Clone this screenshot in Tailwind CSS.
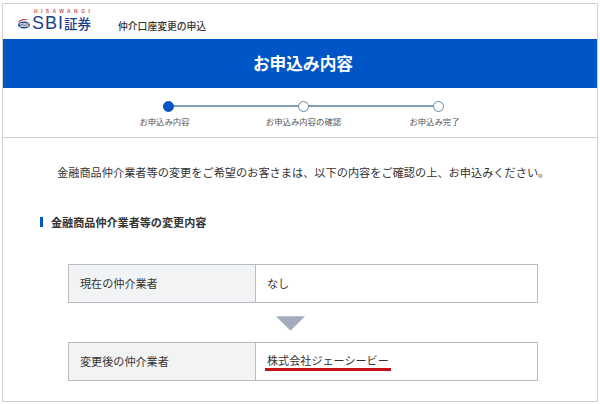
<!DOCTYPE html>
<html lang="ja">
<head>
    <meta charset="UTF-8">
    <meta name="viewport" content="width=device-width, initial-scale=1.0">
    <script src="https://cdn.jsdelivr.net/npm/@tailwindcss/browser@4"></script>
    <title>お申込み内容</title>
</head>
<body class="bg-white font-['Noto_Sans_CJK_JP','Noto_Sans',sans-serif] text-[#333]">
    <div class="w-[600px] h-[404px] pt-[3px] px-[2px] pb-[2px] overflow-hidden">
        <div class="h-[399px] border border-[#d0d0d0] overflow-hidden">
            <!-- header -->
            <div class="h-[35px] flex items-start pl-[14px]">
                <div class="w-[76px] pt-[4px] flex flex-col">
                    <div class="h-[6px] pl-[17px] text-[5px] leading-[6px] tracking-[3.4px] font-bold text-[#c9565a] font-['Liberation_Sans'] whitespace-nowrap">HISAWANGI</div>
                    <div class="flex items-center h-[15px] mt-[2px]">
                        <svg class="w-[14px] h-[13px] shrink-0" viewBox="0 0 14 13">
                            <path d="M1 6 C2 2 7 1 13 3 C8 2 4 3 1 6Z" fill="#c9302c"/>
                            <ellipse cx="7" cy="8" rx="6" ry="3.5" fill="#1b4a96"/>
                            <text x="7" y="10" font-size="5.5" font-weight="700" fill="#fff" text-anchor="middle" font-family="Liberation Sans">SBI</text>
                        </svg>
                        <span class="ml-[1px] text-[18px] leading-[15px] text-[#1b3f86] font-['Liberation_Sans'] tracking-[1px]">SBI</span>
                        <span class="text-[13.5px] leading-[15px] font-medium text-[#1b3f86] whitespace-nowrap">証券</span>
                    </div>
                </div>
                <div class="ml-[25px] mt-[16px] text-[9.8px] leading-[13px] font-medium text-[#333] whitespace-nowrap">仲介口座変更の申込</div>
            </div>
            <!-- title -->
            <div class="h-[49px] pl-[6px] bg-[#0056c6] flex items-center justify-center text-white text-[16.7px] font-bold">お申込み内容</div>
            <!-- steps -->
            <div class="h-[50px] border-b border-[#cfcfcf] relative">
                <div class="absolute left-[166px] top-[17px] w-[270px] h-[2px] bg-[#7f9fb3]"></div>
                <div class="grid grid-cols-3 w-[405px] ml-[98px] pt-[13px] relative">
                    <div class="flex flex-col items-center">
                        <span class="w-[11px] h-[11px] rounded-full bg-[#0056c6] border border-[#0056c6]"></span>
                        <span class="mt-[3px] -ml-[8px] text-[8.4px] leading-[12px] text-[#555] whitespace-nowrap">お申込み内容</span>
                    </div>
                    <div class="flex flex-col items-center">
                        <span class="w-[11px] h-[11px] rounded-full bg-white border border-[#5f8aa5]"></span>
                        <span class="mt-[3px] text-[8.4px] leading-[12px] text-[#555] whitespace-nowrap">お申込み内容の確認</span>
                    </div>
                    <div class="flex flex-col items-center">
                        <span class="w-[11px] h-[11px] rounded-full bg-white border border-[#5f8aa5]"></span>
                        <span class="mt-[3px] -ml-[8px] text-[8.4px] leading-[12px] text-[#555] whitespace-nowrap">お申込み完了</span>
                    </div>
                </div>
            </div>
            <!-- body -->
            <div class="pt-[26px]">
                <p class="text-[11.2px] leading-[16px] pl-[54px] text-[#333] whitespace-nowrap">金融商品仲介業者等の変更をご希望のお客さまは、以下の内容をご確認の上、お申込みください。</p>
                <div class="mt-[34px] ml-[37px] flex items-center h-[16px]">
                    <span class="w-[3px] h-[10px] bg-[#0056c6]"></span>
                    <span class="ml-[8px] text-[11.1px] font-bold text-[#333] whitespace-nowrap">金融商品仲介業者等の変更内容</span>
                </div>
                <div class="mt-[34px] ml-[65px] w-[470px]">
                    <div class="flex h-[39px] border border-[#b8bcc0] text-[11.1px]">
                        <div class="w-[187px] bg-[#f1f3f4] border-r border-[#b8bcc0] flex items-center pl-[11px]">現在の仲介業者</div>
                        <div class="flex-1 flex items-center pl-[11px]">なし</div>
                    </div>
                    <div class="flex pt-[13px] pl-[208px] h-[39px]">
                        <svg class="w-[29px] h-[15px]" viewBox="0 0 30 15"><path d="M0 0H30L15 15Z" fill="#a4acbb"/></svg>
                    </div>
                    <div class="flex h-[39px] border border-[#b8bcc0] text-[11.1px]">
                        <div class="w-[187px] bg-[#f1f3f4] border-r border-[#b8bcc0] flex items-center pl-[11px]">変更後の仲介業者</div>
                        <div class="flex-1 flex items-center pl-[9px]">
                            <span class="border-b-[3px] border-[#c8101a] leading-[14px] pb-[1px] px-[2px] whitespace-nowrap">株式会社ジェーシービー</span>
                        </div>
                    </div>
                </div>
            </div>
        </div>
    </div>
</body>
</html>
